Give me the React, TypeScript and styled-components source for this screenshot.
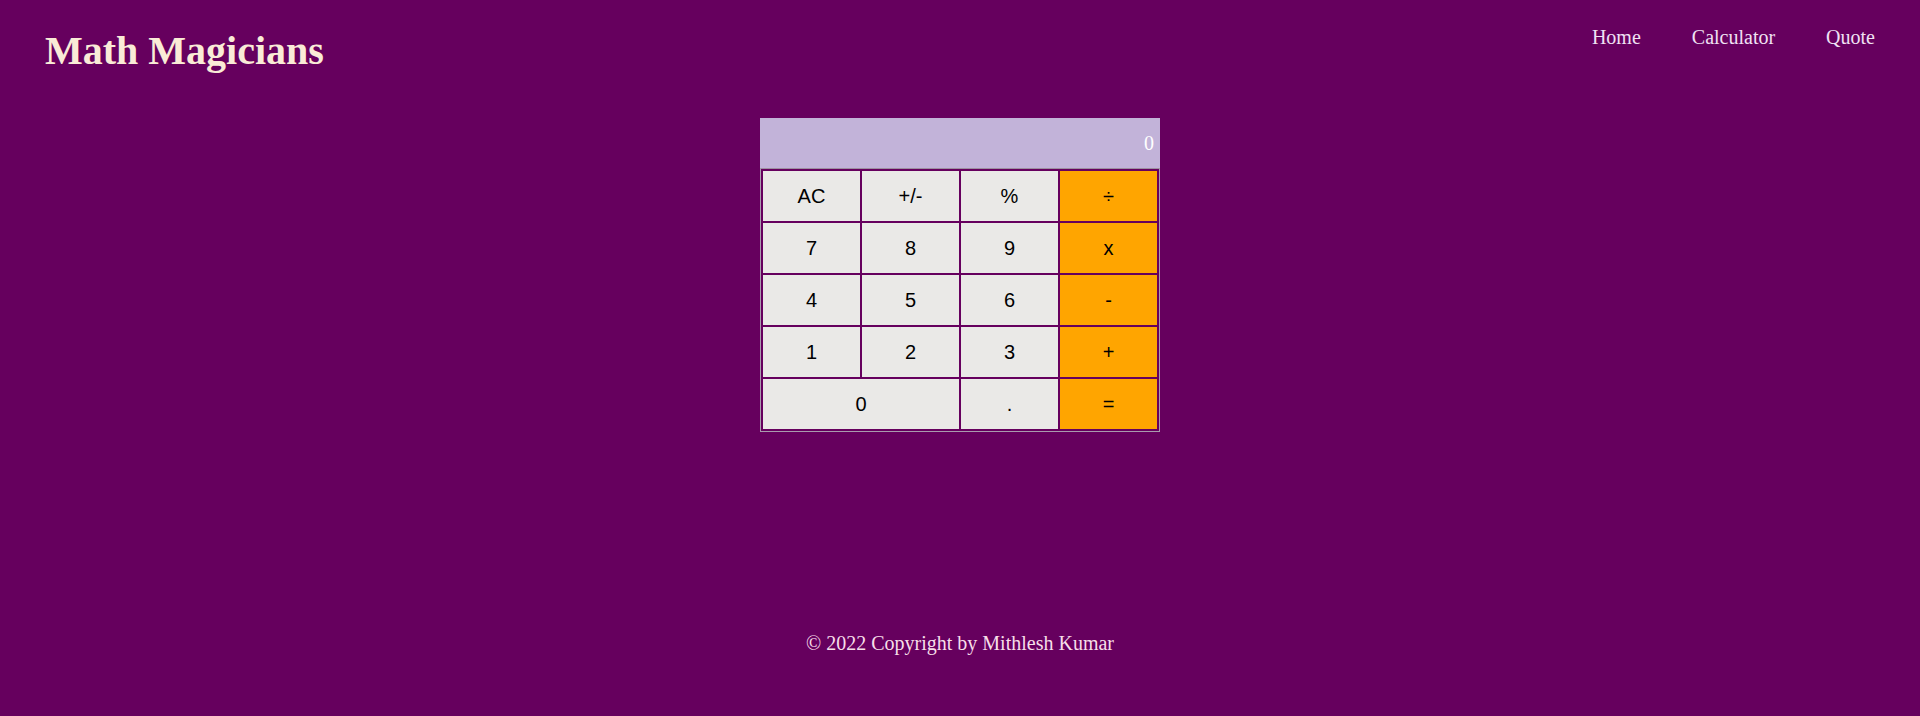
import React from "react";
import styled, { createGlobalStyle } from "styled-components";

const GlobalStyle = createGlobalStyle`
  html, body {
    margin: 0;
    padding: 0;
    background: #66005e;
  }
  body {
    font-family: "Liberation Serif", "Times New Roman", serif;
  }
`;

const Page = styled.div`
  min-height: 716px;
  background: #66005e;
  display: flex;
  flex-direction: column;
`;

const Header = styled.header`
  display: flex;
  justify-content: space-between;
  align-items: flex-start;
  padding: 26px 45px 0 45px;
`;

const Title = styled.h1`
  margin: 1px 0 0;
  font-size: 40px;
  font-weight: bold;
  line-height: normal;
  color: #faebd7;
`;

const Nav = styled.nav`
  display: flex;
  gap: 51px;
`;

const NavLink = styled.a`
  font-size: 20px;
  line-height: normal;
  color: #f0e2f4;
  text-decoration: none;
`;

const Main = styled.main`
  display: flex;
  justify-content: center;
  margin-top: 44px;
`;

const Calculator = styled.div`
  width: 400px;
`;

const Display = styled.div`
  height: 50px;
  background: #c2b3d9;
  color: #ffffff;
  font-size: 20px;
  display: flex;
  align-items: center;
  justify-content: flex-end;
  padding-right: 6px;
  box-sizing: border-box;
`;

const Keys = styled.div`
  display: grid;
  grid-template-columns: repeat(4, 1fr);
  grid-auto-rows: 50px;
  gap: 2px;
  padding: 2px;
  background: #66005e;
  border: 1px solid #a99aae;
  border-top-color: #9c8fa0;
`;

const Key = styled.button<{ $accent?: boolean; $wide?: boolean }>`
  grid-column: ${(p) => (p.$wide ? "span 2" : "auto")};
  border: none;
  margin: 0;
  padding: 0;
  background: ${(p) => (p.$accent ? "#ffa500" : "#eae9e7")};
  color: #000;
  font-family: "Liberation Sans", Arial, sans-serif;
  font-size: 20px;
  cursor: pointer;
`;

const Footer = styled.footer`
  margin-top: 200px;
  text-align: center;
  font-size: 20px;
  line-height: normal;
  color: #f7dfe9;
`;

const keys: { label: string; accent?: boolean; wide?: boolean }[] = [
  { label: "AC" },
  { label: "+/-" },
  { label: "%" },
  { label: "÷", accent: true },
  { label: "7" },
  { label: "8" },
  { label: "9" },
  { label: "x", accent: true },
  { label: "4" },
  { label: "5" },
  { label: "6" },
  { label: "-", accent: true },
  { label: "1" },
  { label: "2" },
  { label: "3" },
  { label: "+", accent: true },
  { label: "0", wide: true },
  { label: "." },
  { label: "=", accent: true },
];

export default function App() {
  return (
    <Page>
      <GlobalStyle />
      <Header>
        <Title>Math Magicians</Title>
        <Nav>
          <NavLink href="#">Home</NavLink>
          <NavLink href="#">Calculator</NavLink>
          <NavLink href="#">Quote</NavLink>
        </Nav>
      </Header>
      <Main>
        <Calculator>
          <Display>0</Display>
          <Keys>
            {keys.map((k) => (
              <Key key={k.label} type="button" $accent={k.accent} $wide={k.wide}>
                {k.label}
              </Key>
            ))}
          </Keys>
        </Calculator>
      </Main>
      <Footer>© 2022 Copyright by Mithlesh Kumar</Footer>
    </Page>
  );
}
